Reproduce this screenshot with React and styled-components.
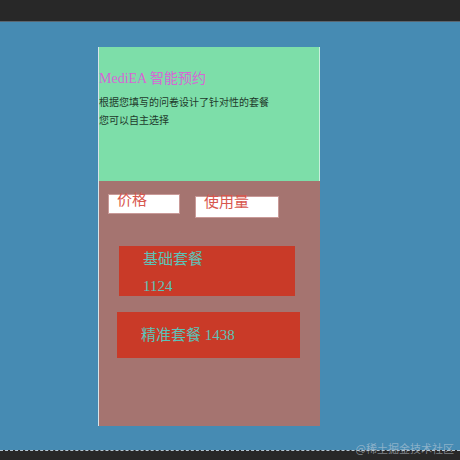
import React from "react";
import styled, { createGlobalStyle } from "styled-components";

const Global = createGlobalStyle`
  html, body { margin: 0; padding: 0; width: 460px; height: 460px; overflow: hidden; }
  body { font-family: "Liberation Serif", "Noto Sans CJK SC", serif; }
`;

const Frame = styled.div`
  position: relative;
  display: flex;
  flex-direction: column;
  width: 460px;
  height: 460px;
`;

const TopBar = styled.div`
  height: 21px;
  background: #282828;
  border-bottom: 1px solid #5a6670;
`;

const Stage = styled.div`
  flex: 1;
  background: #468bb3;
  padding: 25px 0 0 98px;
`;

const Phone = styled.div`
  width: 221px;
  display: flex;
  flex-direction: column;
  border-left: 1px solid #d8e4ea;
`;

const Header = styled.div`
  height: 134px;
  box-sizing: border-box;
  background: #7ddea9;
  box-shadow: inset -1px 0 0 #c8f0dc;
  padding-top: 22px;
`;

const Title = styled.h1`
  margin: 0;
  font-size: 14px;
  line-height: 20px;
  font-weight: normal;
  color: #d766d6;
`;

const Lead = styled.p`
  margin: 5px 0 0;
  font-size: 10px;
  line-height: 18px;
  color: #1f3a2c;
`;

const Body = styled.div`
  height: 245px;
  background: #a57470;
  display: flex;
  flex-direction: column;
  align-items: flex-start;
`;

const Tabs = styled.div`
  display: flex;
  align-items: flex-start;
  gap: 15px;
  padding-left: 9px;
`;

const Tab = styled.div`
  box-sizing: border-box;
  width: ${(p) => p.$w}px;
  height: ${(p) => p.$h}px;
  margin-top: ${(p) => p.$top}px;
  background: #ffffff;
  border: 1px solid #c99a98;
  padding-left: 8px;
  font-size: 15px;
  line-height: 11px;
  color: #d8574e;
`;

const Card = styled.div`
  box-sizing: border-box;
  width: ${(p) => p.$w}px;
  height: ${(p) => p.$h}px;
  margin: ${(p) => p.$mt}px 0 0 ${(p) => p.$ml}px;
  background: #c93a28;
  padding-left: 24px;
  color: #5cc3b8;
  font-size: 15px;
  line-height: ${(p) => p.$lh}px;
`;

const Watermark = styled.div`
  position: absolute;
  right: 6px;
  bottom: 4px;
  font-family: "Noto Sans CJK SC", sans-serif;
  font-size: 11px;
  color: rgba(200, 210, 220, 0.55);
`;

const BottomBar = styled.div`
  height: 10px;
  background: #282828;
  border-top: 1px dashed #b8c8d4;
  box-sizing: border-box;
`;

export default function App() {
  return (
    <>
      <Global />
      <Frame>
        <TopBar />
        <Stage>
          <Phone>
            <Header>
              <Title>MediEA 智能预约</Title>
              <Lead>
                根据您填写的问卷设计了针对性的套餐
                <br />
                您可以自主选择
              </Lead>
            </Header>
            <Body>
              <Tabs>
                <Tab $w={72} $h={20} $top={13}>价格</Tab>
                <Tab $w={84} $h={22} $top={15}>使用量</Tab>
              </Tabs>
              <Card $w={176} $h={50} $mt={28} $ml={20} $lh={27}>
                基础套餐
                <br />
                1124
              </Card>
              <Card $w={183} $h={46} $mt={16} $ml={18} $lh={46}>
                精准套餐 1438
              </Card>
            </Body>
          </Phone>
        </Stage>
        <BottomBar />
        <Watermark>@稀土掘金技术社区</Watermark>
      </Frame>
    </>
  );
}
